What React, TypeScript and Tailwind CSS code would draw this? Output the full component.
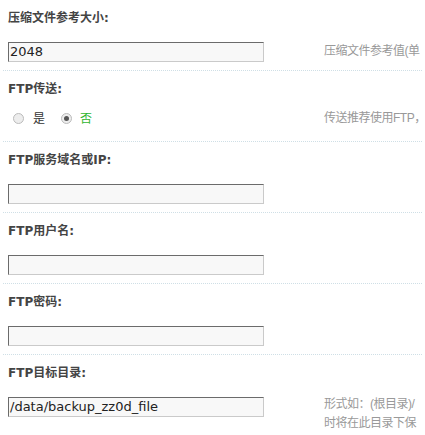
import React from 'react';

const LABEL_FONT = "font-['Tahoma','DejaVu_Sans','Noto_Sans_CJK_SC',sans-serif]";

type Field = {
  label: string;
  value?: string;
};

const fields: Field[] = [
  { label: 'FTP服务域名或IP:' },
  { label: 'FTP用户名:' },
  { label: 'FTP密码:' },
];

function TextBox({ value }: { value?: string }) {
  return (
    <div className="w-[256px] h-[20px] shrink-0 bg-[#f8f8f8] border border-t-[#6b6b6b] border-l-[#6b6b6b] border-r-[#cacaca] border-b-[#cacaca] pl-[1px] text-[13px] leading-[18px] text-[#222] font-['DejaVu_Sans',sans-serif] overflow-hidden whitespace-nowrap">
      {value}
    </div>
  );
}

function Label({ children }: { children: React.ReactNode }) {
  return (
    <div className={`h-[20px] leading-[20px] text-[12px] font-bold text-[#444] pl-[5px] ${LABEL_FONT}`}>
      {children}
    </div>
  );
}

// right column tips, the page is cut at the window edge
function Hint({ children }: { children: React.ReactNode }) {
  return (
    <div className="ml-[60px] shrink-0 text-[12px] leading-[19px] tracking-[-0.5px] text-[#999] whitespace-nowrap font-['Liberation_Sans','Noto_Sans_CJK_SC',sans-serif]">
      {children}
    </div>
  );
}

function Radio({ checked }: { checked?: boolean }) {
  return (
    <span className="w-[11px] h-[11px] rounded-full border border-[#bbb] bg-[#ededed] flex items-center justify-center">
      {checked && <span className="w-[5px] h-[5px] rounded-full bg-[#555]" />}
    </span>
  );
}

export default function App() {
  return (
    <div className="w-[425px] h-[435px] overflow-hidden bg-white px-[3px]">
      {/* 压缩文件参考大小 */}
      <div className="pt-[8px] pb-[8px] border-b border-dotted border-[#cfdfe6]">
        <Label>压缩文件参考大小:</Label>
        <div className="mt-[14px] flex items-start pl-[5px]">
          <TextBox value="2048" />
          <Hint>压缩文件参考值(单</Hint>
        </div>
      </div>

      {/* FTP传送 */}
      <div className="pt-[8px] pb-[16px] border-b border-dotted border-[#cfdfe6]">
        <Label>FTP传送:</Label>
        <div className="mt-[12px] h-[14px] flex items-center pl-[5px]">
          <div className="w-[256px] shrink-0 flex items-center text-[12px] font-['Noto_Sans_CJK_SC',sans-serif]">
            <span className="ml-[5px]"><Radio /></span>
            <span className="ml-[9px] text-[#333]">是</span>
            <span className="ml-[16px]"><Radio checked /></span>
            <span className="ml-[8px] text-[#2fb52f]">否</span>
          </div>
          <Hint>传送推荐使用FTP，</Hint>
        </div>
      </div>

      {fields.map((f) => (
        <div key={f.label} className="pt-[8px] pb-[8px] border-b border-dotted border-[#cfdfe6]">
          <Label>{f.label}</Label>
          <div className="mt-[14px] flex items-start pl-[5px]">
            <TextBox value={f.value} />
          </div>
        </div>
      ))}

      {/* FTP目标目录 */}
      <div className="pt-[8px]">
        <Label>FTP目标目录:</Label>
        <div className="mt-[14px] flex items-start pl-[5px]">
          <TextBox value="/data/backup_zz0d_file" />
          <div className="-mt-[2px]">
            <Hint>
              形式如：(根目录)/
              <br />
              时将在此目录下保
            </Hint>
          </div>
        </div>
      </div>
    </div>
  );
}
